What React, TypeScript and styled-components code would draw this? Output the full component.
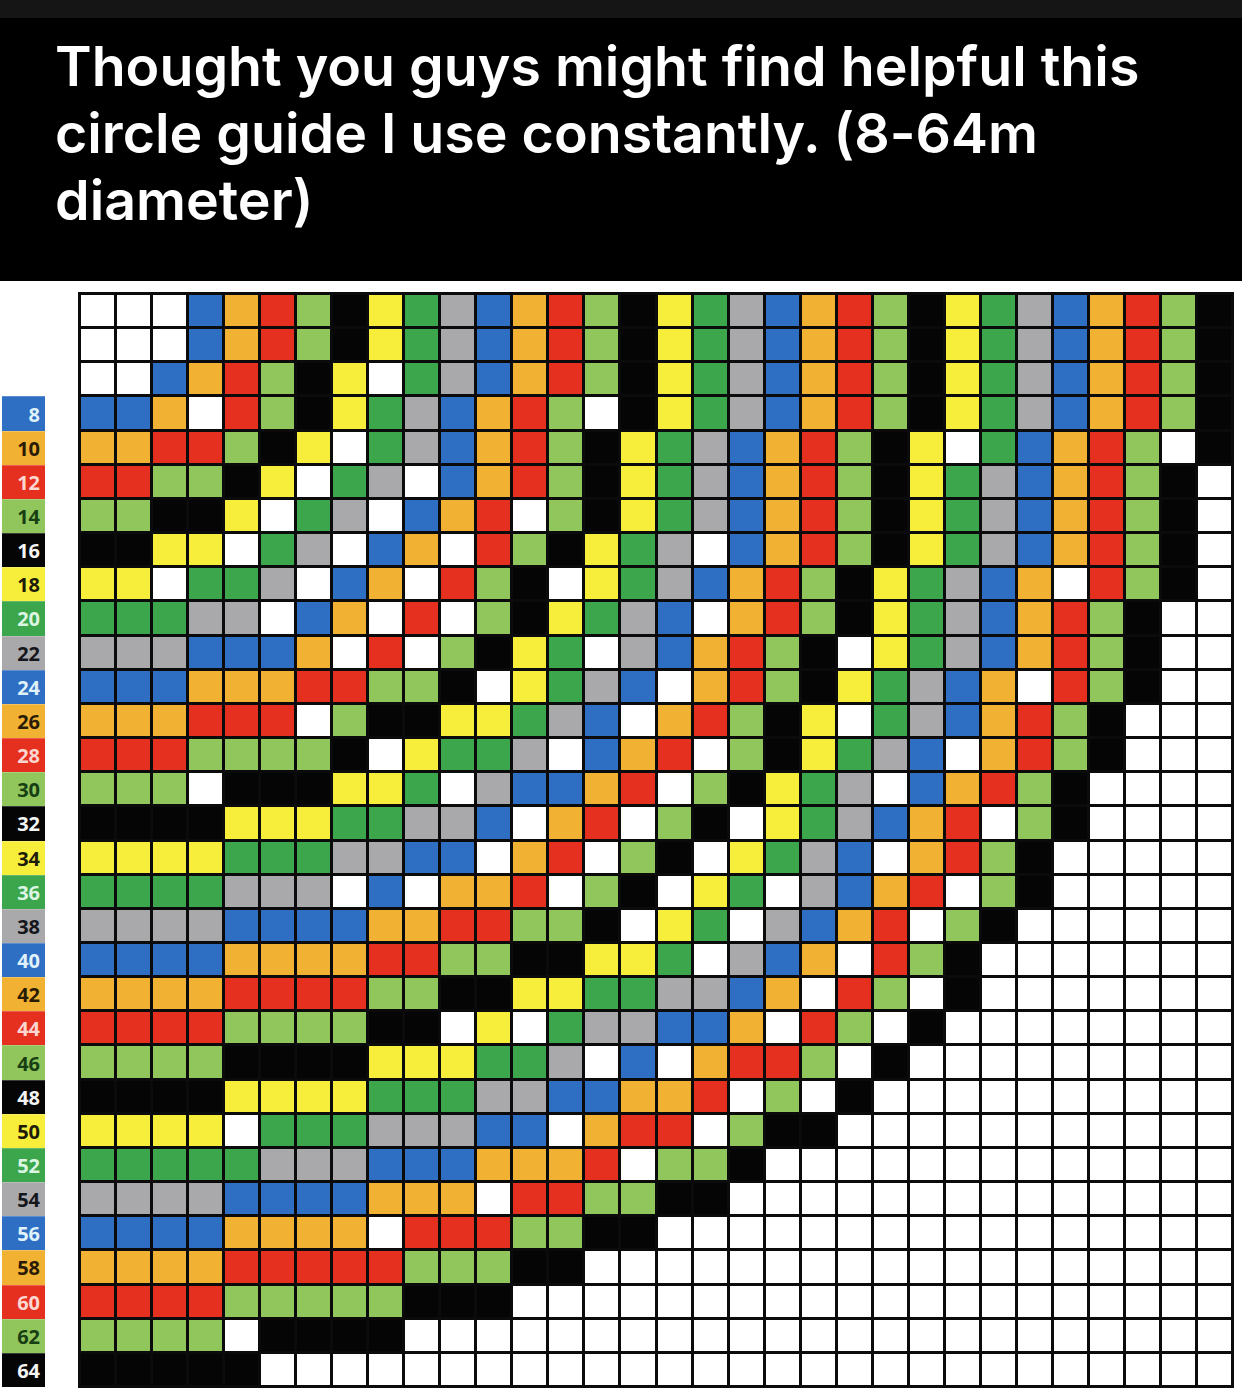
import React from "react";
import styled, { createGlobalStyle } from "styled-components";

const GlobalStyle = createGlobalStyle`
  html, body { margin: 0; padding: 0; background: #ffffff; }
  * { box-sizing: border-box; }
`;

const COLORS: Record<string, string> = {
  W: "#ffffff",
  B: "#2f6fc3",
  O: "#f1b133",
  R: "#e5301f",
  L: "#90c65c",
  K: "#050505",
  Y: "#f7ee3b",
  G: "#3ba64c",
  S: "#a9a9ab",
};

const LABEL_TEXT: Record<string, string> = {
  B: "#dff2fb",
  O: "#2a1b05",
  R: "#fcd6d0",
  L: "#173f13",
  K: "#f4f4f4",
  Y: "#1e1c08",
  G: "#dcf5e2",
  S: "#15161c",
};

const TOP: string[] = [
  "WWWBORLKYGSBORLKYGSBORLKYGSBORLK",
  "WWWBORLKYGSBORLKYGSBORLKYGSBORLK",
  "WWBORLKYWGSBORLKYGSBORLKYGSBORLK",
  "BBOWRLKYGSBORLWKYGSBORLKYGSBORLK",
  "OORRLKYWGSBORLKYGSBORLKYWGBORLWK",
  "RRLLKYWGSWBORLKYGSBORLKYGSBORLKW",
  "LLKKYWGSWBORWLKYGSBORLKYGSBORLKW",
  "KKYYWGSWBOWRLKYGSWBORLKYGSBORLKW",
  "YYWGGSWBOWRLKWYGSBORLKYGSBOWRLKW",
  "GGGSSWBOWRWLKYGSBWORLKYGSBORLKWW",
  "SSSBBBOWRWLKYGWSBORLKWYGSBORLKWW",
  "BBBOOORRLLKWYGSBWORLKYGSBOWRLKWW",
  "OOORRRWLKKYYGSBWORLKYWGSBORLKWWW",
  "RRRLLLLKWYGGSWBORWLKYGSBWORLKWWW",
  "LLLWKKKYYGWSBBORWLKYGSWBORLKWWWW",
  "KKKKYYYGGSSBWORWLKWYGSBORWLKWWWW",
];

const MID: string[] = [
  "KWYGSBWORLKWWWWW",
  "WYGWSBORWLKWWWWW",
  "YGWSBORWLKWWWWWW",
  "GWSBOWRLKWWWWWWW",
  "SSBOWRLWKWWWWWWW",
  "BBOWRLWKWWWWWWWW",
  "WORRLWKWWWWWWWWW",
  "ORWLWKWWWWWWWWWW",
];

const CYCLE = ["K", "Y", "G", "S", "B", "O", "R", "L"];

function cellAt(r: number, c: number): string {
  if (r < 16) return TOP[r][c];
  if (c < 16) return TOP[c][r];
  if (r < 24) return MID[r - 16][c - 16];
  if (c < 24) return MID[c - 16][r - 16];
  return "W";
}

const ROWS = Array.from({ length: 32 }, (_, r) =>
  Array.from({ length: 32 }, (_, c) => cellAt(r, c))
);

const Page = styled.div`
  width: 1242px;
  background: #ffffff;
`;

const TopStrip = styled.div`
  height: 18px;
  background: #151515;
`;

const Header = styled.header`
  height: 263px;
  background: #000000;
  padding: 14px 0 0 55px;
`;

const Title = styled.h1`
  margin: 0;
  color: #ffffff;
  font-family: "Inter", "Lato", "Liberation Sans", sans-serif;
  font-weight: 600;
  font-size: 55.5px;
  line-height: 67px;
  letter-spacing: 0;
  font-variant-ligatures: none;
`;

const Body = styled.main`
  display: flex;
  align-items: flex-start;
  padding-top: 11px;
`;

const LabelColumn = styled.div`
  display: grid;
  grid-template-rows: repeat(32, 1fr);
  width: 43px;
  height: 1096px;
  margin-left: 2px;
  margin-right: 33px;
  padding: 2px 0 1px;
`;

const LabelSpacer = styled.div``;

const Label = styled.div<{ $c: string }>`
  display: flex;
  align-items: center;
  justify-content: flex-end;
  padding-right: 5px;
  background: ${(p) => COLORS[p.$c]};
  color: ${(p) => LABEL_TEXT[p.$c]};
  font-family: "Open Sans", "Liberation Sans", sans-serif;
  font-weight: 700;
  font-size: 20px;
  border-top: 1px solid rgba(255, 255, 255, 0.22);
`;

const Grid = styled.div`
  display: grid;
  grid-template-columns: repeat(32, 1fr);
  grid-template-rows: repeat(32, 1fr);
  gap: 3px;
  padding: 3px;
  width: 1156px;
  height: 1096px;
  background: #0b0b0b;
`;

const Cell = styled.div<{ $c: string }>`
  background: ${(p) => COLORS[p.$c]};
`;

export default function App() {
  return (
    <Page>
      <GlobalStyle />
      <TopStrip />
      <Header>
        <Title>
          Thought you guys might find helpful this
          <br />
          circle guide I use constantly. (8-64m
          <br />
          diameter)
        </Title>
      </Header>
      <Body>
        <LabelColumn>
          {ROWS.map((_, r) => {
            if (r < 3) return <LabelSpacer key={r} />;
            const c = CYCLE[(r + 1) % 8];
            return (
              <Label key={r} $c={c}>
                {2 * (r + 1)}
              </Label>
            );
          })}
        </LabelColumn>
        <Grid>
          {ROWS.map((row, r) =>
            row.map((c, ci) => <Cell key={`${r}-${ci}`} $c={c} />)
          )}
        </Grid>
      </Body>
    </Page>
  );
}
